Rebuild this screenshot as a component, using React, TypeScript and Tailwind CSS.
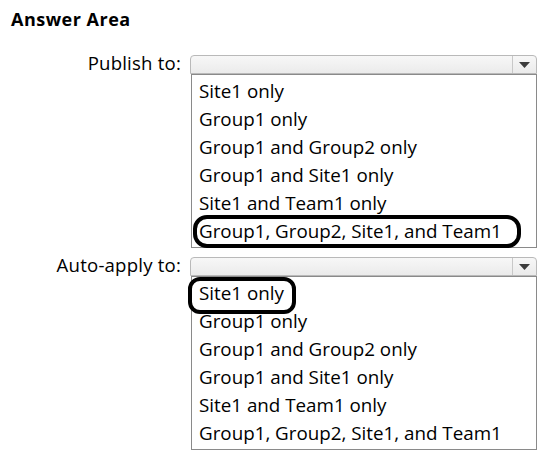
import React from "react";

const options = [
  "Site1 only",
  "Group1 only",
  "Group1 and Group2 only",
  "Group1 and Site1 only",
  "Site1 and Team1 only",
  "Group1, Group2, Site1, and Team1",
];

function Arrow() {
  return (
    <svg width="11" height="6" viewBox="0 0 11 6">
      <polygon points="0,0 11,0 5.5,6" fill="#3c3c3c" />
    </svg>
  );
}

function Block({
  label,
  circle,
}: {
  label: string;
  circle: "last" | "first";
}) {
  return (
    <div className="flex flex-col">
      <div className="flex items-start">
        <div className="w-[190px] pr-[9px] text-right text-[18.6px] leading-[16px] tracking-[0.2px] text-black whitespace-nowrap">
          {label}
        </div>
        <div className="flex h-[19px] w-[347px] items-stretch rounded-t-[4px] border border-[#b9b9b9] bg-gradient-to-b from-[#f7f7f7] to-[#ebebeb]">
          <div className="flex-1" />
          <div className="flex w-[24px] items-center justify-center border-l border-[#c8c8c8]">
            <Arrow />
          </div>
        </div>
      </div>
      <div className="ml-[191px] w-[346px] relative">
        <div className="border border-[#8a8a8a] bg-white py-[2px]">
          {options.map((o) => (
            <div
              key={o}
              className="h-[28px] pl-[7px] text-[18.8px] leading-[28px] text-black whitespace-nowrap"
            >
              {o}
            </div>
          ))}
        </div>
        {circle === "last" ? (
          <div className="absolute left-[2px] top-[141px] h-[33px] w-[328px] rounded-[14px] border-4 border-black" />
        ) : (
          <div className="absolute left-[-3px] top-[1px] h-[37px] w-[108px] rounded-[12px] border-4 border-black" />
        )}
      </div>
    </div>
  );
}

export default function App() {
  return (
    <div
      className="h-[458px] w-[544px] bg-white"
      style={{ fontFamily: '"Open Sans", "Noto Sans", sans-serif' }}
    >
      <div className="pl-[11px] pt-[7px] text-[18px] font-bold leading-[24px] tracking-[0.5px] text-black">
        Answer Area
      </div>
      <div className="mt-[24px] flex flex-col gap-[9px]">
        <Block label="Publish to:" circle="last" />
        <Block label="Auto-apply to:" circle="first" />
      </div>
    </div>
  );
}
